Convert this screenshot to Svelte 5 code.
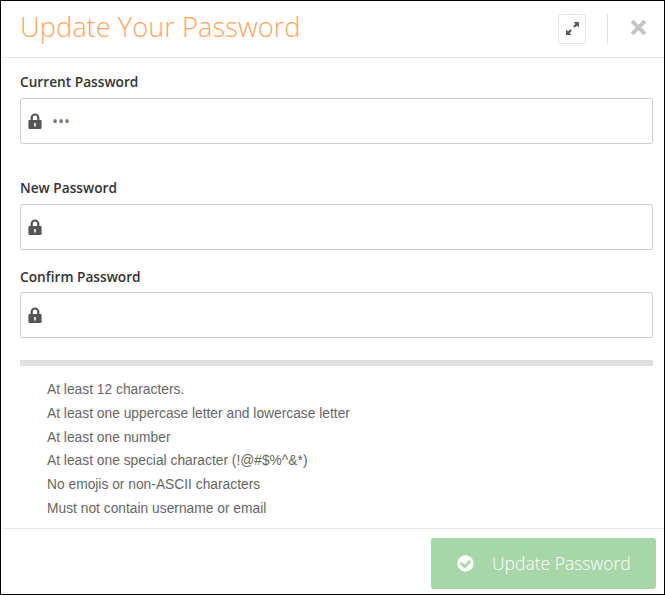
<script>
  let rules = [
    "At least 12 characters.",
    "At least one uppercase letter and lowercase letter",
    "At least one number",
    "At least one special character (!@#$%^&*)",
    "No emojis or non-ASCII characters",
    "Must not contain username or email",
  ];
</script>

{#snippet lock()}
  <svg class="lock" viewBox="0 0 14 16" aria-hidden="true">
    <path
      fill-rule="evenodd"
      d="M2.600 7V4.800C2.600 2.300 4.500.4 7 .4s4.400 1.900 4.400 4.400V7h1c.7 0 1.200.5 1.200 1.200v6.500c0 .7-.5 1.200-1.200 1.200H1.600c-.7 0-1.200-.5-1.200-1.200V8.200C.4 7.500.9 7 1.600 7h1zm2.200 0h4.400V4.800c0-1.300-.9-2.200-2.200-2.200s-2.200.9-2.200 2.200V7zm1.400 3v3.600h1.600V10H6.200z"
    />
  </svg>
{/snippet}

<div class="modal">
  <header>
    <h1>Update Your Password</h1>
    <button class="expand" aria-label="Expand">
      <svg viewBox="0 0 14 14" aria-hidden="true">
        <path d="M8 1h5v5l-1.800-1.800L9 6.400 7.600 5l2.200-2.200zM1 8l1.800 1.800L5 7.600 6.400 9l-2.200 2.200L6 13H1z" />
      </svg>
    </button>
    <span class="divider"></span>
    <button class="close" aria-label="Close">
      <svg viewBox="0 0 16 16" aria-hidden="true">
        <path d="M3.200.6 8 5.400 12.800.6l2.600 2.600L10.600 8l4.800 4.800-2.600 2.600L8 10.600l-4.800 4.800-2.600-2.600L5.400 8 .6 3.200z" />
      </svg>
    </button>
  </header>

  <form>
    <label class="first">
      <span>Current Password</span>
      <div class="field">
        {@render lock()}
        <input type="password" value="abc" />
      </div>
    </label>
    <label class="second">
      <span>New Password</span>
      <div class="field">
        {@render lock()}
        <input type="password" />
      </div>
    </label>
    <label class="third">
      <span>Confirm Password</span>
      <div class="field">
        {@render lock()}
        <input type="password" />
      </div>
    </label>
    <hr />
    <ul>
      {#each rules as rule}
        <li>{rule}</li>
      {/each}
    </ul>
  </form>

  <footer>
    <button class="submit" type="button">
      <svg viewBox="0 0 1792 1792" aria-hidden="true">
        <path d="M1412 734q0-28-18-46l-91-90q-19-19-45-19t-45 19l-408 407-226-226q-19-19-45-19t-45 19l-91 90q-18 18-18 46 0 27 18 45l362 362q19 19 45 19 27 0 46-19l543-543q18-18 18-45zm252 162q0 209-103 385.500t-279.500 279.500-385.500 103-385.500-103-279.500-279.500-103-385.500 103-385.500 279.500-279.500 385.500-103 385.500 103 279.500 279.500 103 385.500z" />
      </svg>
      Update Password
    </button>
  </footer>
</div>

<style>
  :global(body) {
    margin: 0;
    background: #fff;
  }

  * {
    box-sizing: border-box;
  }

  .modal {
    width: 665px;
    height: 595px;
    border: 1px solid #000;
    font-family: "Open Sans", sans-serif;
    color: #333;
    display: flex;
    flex-direction: column;
    background: #fff;
  }

  header {
    height: 57px;
    flex: none;
    border-bottom: 1px solid #e5e5e5;
    display: flex;
    align-items: center;
    padding: 0 17px 4px 19px;
  }

  h1 {
    margin: 0;
    flex: 1;
    font-size: 27.3px;
    font-weight: 300;
    color: #ffa55f;
    line-height: 1;
  }

  button {
    font-family: inherit;
    cursor: pointer;
  }

  .expand {
    width: 28px;
    height: 30px;
    padding: 0;
    border: 1px solid #e5e5e5;
    border-radius: 3px;
    background: #fff;
    display: flex;
    align-items: center;
    justify-content: center;
    margin-top: 3px;
  }

  .expand svg {
    width: 15px;
    height: 15px;
    fill: #555;
  }

  .divider {
    width: 1px;
    height: 30px;
    background: #e0e0e0;
    margin: 3px 22px 0 21px;
  }

  .close {
    width: 17px;
    height: 17px;
    padding: 0;
    border: 0;
    background: none;
    display: flex;
  }

  .close svg {
    width: 17px;
    height: 17px;
    fill: #c4c4c4;
  }

  form {
    flex: 1;
    padding: 0 11px 0 19px;
    min-height: 0;
  }

  label {
    display: block;
  }

  label span {
    display: block;
    font-size: 13.7px;
    font-weight: 600;
    line-height: 20px;
    margin-bottom: 6px;
  }

  .first {
    padding-top: 14px;
  }

  .second {
    padding-top: 34px;
  }

  .third {
    padding-top: 17px;
  }

  .third span {
    margin-bottom: 5px;
  }

  .field {
    height: 46px;
    border: 1px solid #ccc;
    border-radius: 3px;
    display: flex;
    align-items: center;
    padding-left: 7px;
    gap: 10px;
  }

  .lock {
    width: 14px;
    height: 16px;
    flex: none;
    fill: #555;
  }

  input {
    flex: 1;
    min-width: 0;
    height: 100%;
    border: 0;
    outline: 0;
    padding: 0;
    background: none;
    font-family: inherit;
    font-size: 16px;
    color: #777;
  }

  hr {
    height: 6px;
    margin: 22px 0 12px;
    border: 0;
    background: #e0e0e0;
  }

  ul {
    list-style: none;
    margin: 0;
    padding: 0 0 0 27px;
    font-family: "Liberation Sans", Arial, sans-serif;
    font-size: 13.8px;
    line-height: 23.8px;
    color: #666;
  }

  footer {
    height: 66px;
    flex: none;
    border-top: 1px solid #e5e5e5;
    display: flex;
    justify-content: flex-end;
    align-items: center;
    padding-right: 8px;
    padding-top: 3px;
  }

  .submit {
    width: 225px;
    height: 51px;
    border: 0;
    border-radius: 3px;
    background: #a7d6a8;
    color: #fff;
    font-size: 17.5px;
    font-weight: 300;
    display: flex;
    align-items: center;
    padding: 0 0 0 25px;
    gap: 17px;
  }

  .submit svg {
    width: 19px;
    height: 19px;
    fill: #fff;
  }
</style>
